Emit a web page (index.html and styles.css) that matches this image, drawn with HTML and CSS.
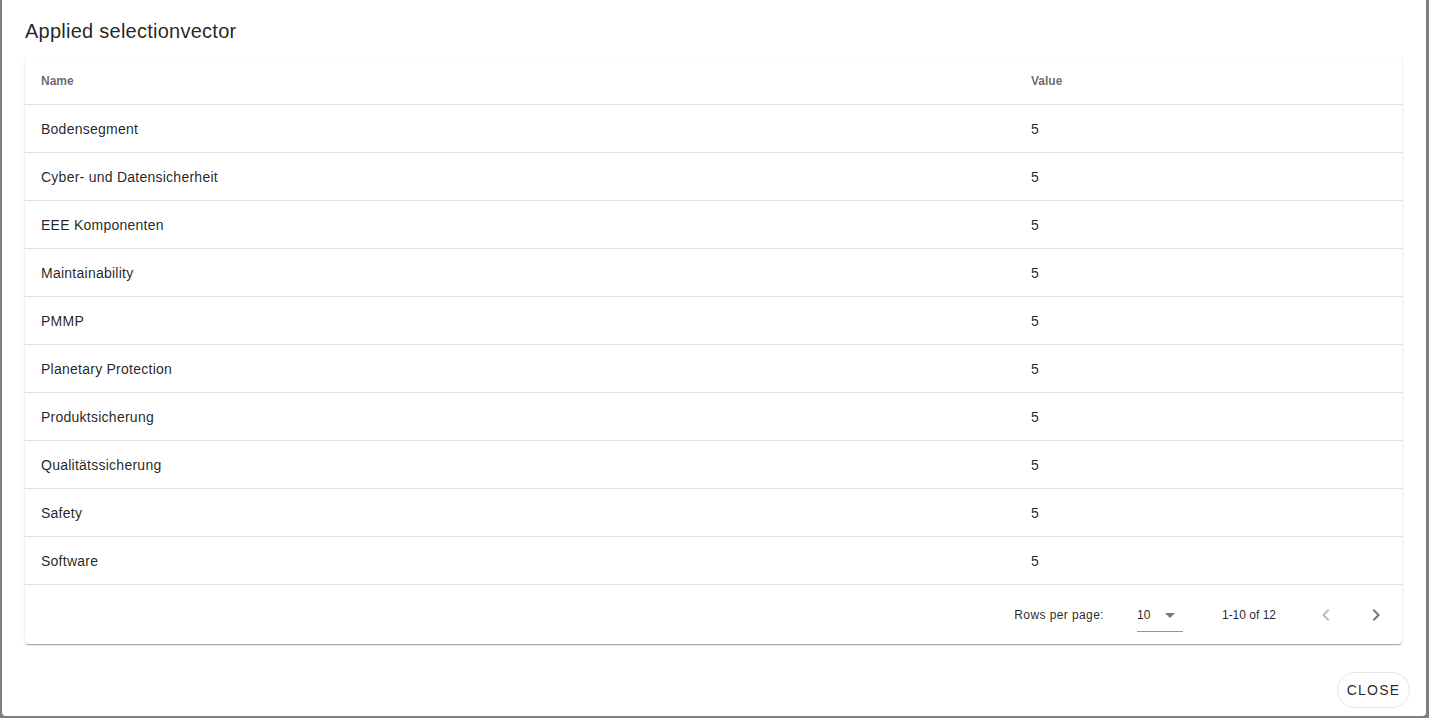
FILE: index.html
```html
<!DOCTYPE html>
<html>
<head>
    <title>Applied selectionvector</title>
    <meta name="viewport" content="width=device-width, initial-scale=1">
    <link rel="stylesheet" href="styles.css">
</head>
<body>
    <div class="overlay">
        <div class="dialog">
            <div class="dialog-title">Applied selectionvector</div>

            <div class="card">
                <table class="data-table">
                    <thead>
                        <tr>
                            <th class="col-name">Name</th>
                            <th>Value</th>
                        </tr>
                    </thead>
                    <tbody>
                        <tr><td>Bodensegment</td><td>5</td></tr>
                        <tr><td>Cyber- und Datensicherheit</td><td>5</td></tr>
                        <tr><td>EEE Komponenten</td><td>5</td></tr>
                        <tr><td>Maintainability</td><td>5</td></tr>
                        <tr><td>PMMP</td><td>5</td></tr>
                        <tr><td>Planetary Protection</td><td>5</td></tr>
                        <tr><td>Produktsicherung</td><td>5</td></tr>
                        <tr><td>Qualitätssicherung</td><td>5</td></tr>
                        <tr><td>Safety</td><td>5</td></tr>
                        <tr><td>Software</td><td>5</td></tr>
                    </tbody>
                </table>

                <div class="table-footer">
                    <span class="rows-label">Rows per page:</span>
                    <div class="rows-select">
                        <span>10</span>
                        <svg class="select-arrow" viewBox="0 0 24 24" width="24" height="24"><path d="M7,10L12,15L17,10H7Z"/></svg>
                    </div>
                    <span class="page-info">1-10 of 12</span>
                    <button class="page-button disabled">
                        <svg viewBox="0 0 24 24" width="24" height="24"><path d="M15.41,16.58L10.83,12L15.41,7.41L14,6L8,12L14,18L15.41,16.58Z"/></svg>
                    </button>
                    <button class="page-button">
                        <svg viewBox="0 0 24 24" width="24" height="24"><path d="M8.59,16.58L13.17,12L8.59,7.41L10,6L16,12L10,18L8.59,16.58Z"/></svg>
                    </button>
                </div>
            </div>

            <div class="dialog-actions">
                <button class="close-button">Close</button>
            </div>
        </div>
    </div>
</body>
</html>
```

FILE: styles.css
```css
body {
    margin: 0;
    padding: 0;
    font-family: "Liberation Sans", Arial, sans-serif;
    background-color: #7f7f7f;
    color: rgba(0, 0, 0, 0.87);
}

.overlay {
    height: 718px;
    overflow: hidden;
}

.dialog {
    margin-left: 2px;
    width: 1424px;
    height: 716px;
    background-color: #fff;
    border-radius: 0 0 4px 4px;
    display: flex;
    flex-direction: column;
}

.dialog-title {
    padding: 15px 23px 10px;
    font-size: 20px;
    line-height: 32px;
    letter-spacing: 0.25px;
}

.card {
    margin: 0 24px 0 23px;
    border-radius: 4px;
    background-color: #fff;
    box-shadow: 0 2px 1px -1px rgba(0, 0, 0, 0.2), 0 1px 1px 0 rgba(0, 0, 0, 0.14), 0 1px 3px 0 rgba(0, 0, 0, 0.12);
}

.data-table {
    width: 100%;
    border-spacing: 0;
}

.data-table th,
.data-table td {
    box-sizing: border-box;
    height: 48px;
    padding: 0 16px;
    text-align: left;
    border-bottom: 1px solid rgba(0, 0, 0, 0.12);
}

.data-table th {
    font-size: 12px;
    font-weight: bold;
    color: rgba(0, 0, 0, 0.6);
}

.data-table td {
    font-size: 14px;
    letter-spacing: 0.25px;
}

.col-name {
    width: 990px;
}

.table-footer {
    height: 59px;
    display: flex;
    align-items: center;
    justify-content: flex-end;
    padding-right: 8px;
    font-size: 12px;
}

.rows-label {
    letter-spacing: 0.4px;
}

.rows-select {
    margin-left: 33px;
    width: 46px;
    height: 34px;
    box-sizing: border-box;
    display: flex;
    align-items: center;
    justify-content: space-between;
    border-bottom: 1px solid rgba(0, 0, 0, 0.42);
    margin-top: 1px;
}

.select-arrow {
    fill: rgba(0, 0, 0, 0.54);
    margin-right: 1px;
}

.page-info {
    margin-left: 39px;
    margin-right: 32px;
}

.page-button {
    width: 36px;
    height: 36px;
    padding: 0;
    border: none;
    background: none;
    display: flex;
    align-items: center;
    justify-content: center;
    fill: rgba(0, 0, 0, 0.54);
    cursor: pointer;
}

.page-button + .page-button {
    margin-left: 14px;
}

.page-button.disabled {
    fill: rgba(0, 0, 0, 0.26);
}

.dialog-actions {
    margin-top: auto;
    display: flex;
    justify-content: flex-end;
    padding: 8px 16px;
}

.close-button {
    height: 36px;
    width: 73px;
    padding: 0;
    border: 1px solid #e6e6e6;
    border-radius: 18px;
    background-color: #fff;
    font-family: "Liberation Sans", Arial, sans-serif;
    font-size: 14px;
    letter-spacing: 1.2px;
    text-transform: uppercase;
    color: rgba(0, 0, 0, 0.87);
    cursor: pointer;
}
```
